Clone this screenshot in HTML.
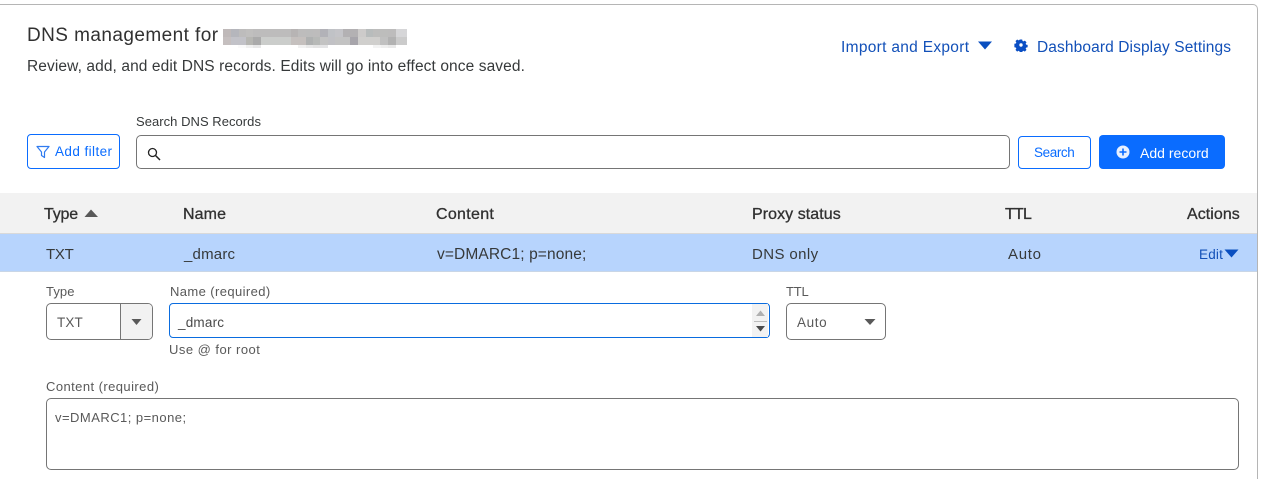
<!DOCTYPE html>
<html lang="en"><head><meta charset="utf-8"><title>DNS management</title>
<style>
html,body{margin:0;padding:0;width:1269px;height:479px;overflow:hidden;background:#fff}
body{font-family:"Liberation Sans",sans-serif;color:#36393a}
#w{position:relative;width:1269px;height:479px;overflow:hidden}
.t{position:absolute;white-space:nowrap;line-height:20px;height:20px}
.b{position:absolute;box-sizing:border-box}
svg{position:absolute;display:block}
.h{font-size:16px;font-weight:400;color:#313131;-webkit-text-stroke:.3px #313131}
.r{font-size:15.5px;color:#36393a}
.l{font-size:13px;color:#595959}
.lnk{color:#0b4fc4;font-size:15.5px}
</style></head><body><div id="w">
<div class="b" style="left:-10px;top:4px;width:1268px;height:470px;border:1px solid #b5b5b5;border-bottom:0;border-radius:5px 5px 0 0"></div>
<div class="b" style="left:1257px;top:470px;width:1px;height:9px;background:#b5b5b5"></div>

<div class="t" style="left:27px;top:26px;font-size:19px;color:#313131;letter-spacing:.43px">DNS management for</div>
<svg style="left:223px;top:29px" width="185" height="20" shape-rendering="crispEdges">
<g>
<rect x="0" y="0" width="184" height="8" fill="#bdbcbc"/><rect x="0" y="8" width="184" height="8" fill="#c3c3c3"/>
<rect x="0" y="0" width="8" height="8" fill="#bfb9b9"/><rect x="8" y="0" width="8" height="8" fill="#b5b6bc"/><rect x="23" y="0" width="7" height="8" fill="#c0bfbe"/><rect x="68" y="0" width="7" height="8" fill="#b7b4b4"/><rect x="83" y="0" width="7" height="8" fill="#bcbcbc"/><rect x="97" y="0" width="8" height="8" fill="#b2b2b8"/><rect x="105" y="0" width="7" height="8" fill="#c0c2c6"/><rect x="112" y="0" width="8" height="8" fill="#c4c4c8"/><rect x="120" y="0" width="15" height="8" fill="#b3b1b3"/><rect x="135" y="0" width="8" height="8" fill="#cdcbca"/><rect x="143" y="0" width="7" height="8" fill="#b8bcbc"/><rect x="150" y="0" width="15" height="8" fill="#bdbdbc"/><rect x="173" y="0" width="11" height="8" fill="#d6d6d8"/>
<rect x="0" y="8" width="8" height="8" fill="#c5bfbf"/><rect x="8" y="8" width="15" height="8" fill="#c2c2c8"/><rect x="23" y="8" width="8" height="8" fill="#b6b6b2"/><rect x="30" y="8" width="8" height="8" fill="#aaaaaa"/><rect x="38" y="8" width="30" height="8" fill="#cbcdcb"/><rect x="68" y="8" width="15" height="8" fill="#c5c0be"/><rect x="83" y="8" width="14" height="8" fill="#afb1b1"/><rect x="90" y="8" width="7" height="8" fill="#b7b9b7"/><rect x="105" y="8" width="7" height="8" fill="#c1c1c5"/><rect x="127" y="8" width="30" height="8" fill="#cfcfcc"/><rect x="127" y="8" width="8" height="8" fill="#a7a5ab"/><rect x="135" y="8" width="22" height="8" fill="#d0cfcd"/><rect x="157" y="8" width="8" height="8" fill="#c0c0c0"/><rect x="165" y="8" width="8" height="8" fill="#b2b2b2"/><rect x="173" y="8" width="11" height="8" fill="#cbcbcb"/>
<rect x="15" y="16" width="8" height="3" fill="#fafafa"/><rect x="23" y="16" width="7" height="3" fill="#f0f0f0"/><rect x="30" y="16" width="8" height="3" fill="#e8e8e8"/><rect x="75" y="16" width="8" height="3" fill="#f1f1f1"/><rect x="83" y="16" width="7" height="3" fill="#e9e9e9"/><rect x="90" y="16" width="7" height="3" fill="#e4e4e4"/><rect x="97" y="16" width="8" height="3" fill="#e4e4e6"/><rect x="150" y="16" width="8" height="3" fill="#f3f3f3"/><rect x="158" y="16" width="7" height="3" fill="#eeeeee"/><rect x="165" y="16" width="8" height="3" fill="#e9e9e9"/>
</g></svg>
<div class="t" style="left:27px;top:57px;font-size:15.5px;color:#36393a;letter-spacing:.1px">Review, add, and edit DNS records. Edits will go into effect once saved.</div>

<div class="t lnk" style="left:841px;top:38px;font-size:15.5px;color:#1250b8;letter-spacing:.3px">Import and Export</div>
<svg style="left:977px;top:41px" width="16" height="10"><path d="M1 0.500H15L8 8.500Z" fill="#0a4fc0"/></svg>
<svg style="left:1014px;top:38px" width="14" height="14" viewBox="0 0 14 14"><path fill="#0b4fc4" fill-rule="evenodd" d="M5.600 0.500h2.800l.4 1.800 1.100.5 1.600-1 2 2-1 1.600.5 1.100 1.800.4v2.800l-1.800.4-.5 1.100 1 1.600-2 2-1.600-1-1.100.5-.4 1.800H5.600l-.4-1.800-1.100-.5-1.600 1-2-2 1-1.600-.5-1.100-1.800-.4V5.600l1.800-.4.5-1.100-1-1.600 2-2 1.600 1 1.100-.5zM7 5a2 2 0 1 0 0 4a2 2 0 0 0 0-4z" transform="translate(1.050 1.050) scale(.85)"/></svg>
<div class="t lnk" style="left:1037px;top:38px;font-size:15.5px;color:#1250b8;letter-spacing:.11px">Dashboard Display Settings</div>

<div class="t l" style="left:136px;top:112px;color:#36393a;font-size:13px;letter-spacing:.04px">Search DNS Records</div>
<div class="b" style="left:27px;top:134px;height:35px;width:93px;border:1px solid #0a6cff;border-radius:4px"></div>
<svg style="left:36px;top:145px" width="14" height="14" viewBox="0 0 14 14"><path d="M1 1.500H13L8.500 7V12.500L5.500 10.500V7Z" fill="none" stroke="#2f7bf0" stroke-width="1.200" stroke-linejoin="round"/></svg>
<div class="t" style="left:55px;top:142px;font-size:13.5px;color:#0a6cff;letter-spacing:.42px">Add filter</div>
<div class="b" style="left:136px;top:135px;width:874px;height:34px;border:1px solid #757575;border-radius:5px"></div>
<svg style="left:147px;top:147px" width="14" height="14" viewBox="0 0 14 14"><circle cx="5.500" cy="5.500" r="4" fill="none" stroke="#222" stroke-width="1.300"/><path d="M8.500 8.500L13 13" stroke="#222" stroke-width="1.500"/></svg>
<div class="b" style="left:1018px;top:136px;width:73px;height:33px;border:1px solid #0a6cff;border-radius:4px"></div>
<div class="t" style="left:1034px;top:143px;font-size:13.5px;color:#0a6cff;letter-spacing:-.4px">Search</div>
<div class="b" style="left:1099px;top:135px;width:126px;height:34px;background:#0a6cff;border-radius:4px"></div>
<svg style="left:1116px;top:145px" width="14" height="14" viewBox="0 0 14 14"><circle cx="7" cy="7" r="6.500" fill="#e8f0ff"/><path d="M7 3.500V10.500M3.500 7H10.500" stroke="#0a6cff" stroke-width="1.600"/></svg>
<div class="t" style="left:1140px;top:143px;font-size:14px;color:#fff;letter-spacing:.02px">Add record</div>

<div class="b" style="left:0;top:193px;width:1257px;height:41px;background:#f2f2f2;border-bottom:1px solid #d9d9d9"></div>
<div class="b" style="left:0;top:234px;width:1257px;height:38px;background:#b7d4fd;border-bottom:1px solid #c9d6e6"></div>
<div class="t h" style="left:44px;top:205px;letter-spacing:-.2px">Type</div>
<svg style="left:84px;top:208px" width="15" height="10"><path d="M0.500 9L7 1.500L14 9Z" fill="#595959"/></svg>
<div class="t h" style="left:183px;top:205px;letter-spacing:.1px">Name</div>
<div class="t h" style="left:436px;top:205px;letter-spacing:.3px">Content</div>
<div class="t h" style="left:752px;top:205px;letter-spacing:.06px">Proxy status</div>
<div class="t h" style="left:1005px;top:205px;letter-spacing:-.8px">TTL</div>
<div class="t h" style="left:1187px;top:205px;letter-spacing:.05px">Actions</div>

<div class="t r" style="left:46px;top:245px;font-size:15px;letter-spacing:-.3px">TXT</div>
<div class="t r" style="left:184px;top:245px;font-size:15px;letter-spacing:.2px">_dmarc</div>
<div class="t r" style="left:437px;top:245px;font-size:15.5px;letter-spacing:.12px">v=DMARC1; p=none;</div>
<div class="t r" style="left:752px;top:245px;font-size:15px;letter-spacing:.4px">DNS only</div>
<div class="t r" style="left:1008px;top:245px;font-size:15px;letter-spacing:.7px">Auto</div>
<div class="t" style="left:1199px;top:245px;font-size:13.5px;color:#1250b8;letter-spacing:.2px">Edit</div>
<svg style="left:1224px;top:249px" width="15" height="10"><path d="M0.500 0.500H14.500L7.500 8.500Z" fill="#0a4fc0"/></svg>

<div class="t l" style="left:46px;top:282px;letter-spacing:.1px">Type</div>
<div class="b" style="left:46px;top:303px;width:107px;height:37px;border:1px solid #757575;border-radius:5px;overflow:hidden"><div class="b" style="left:73px;top:0;width:33px;height:36px;background:#f2f2f2;border-left:1px solid #757575"></div></div>
<svg style="left:131px;top:318px" width="11" height="8"><path d="M0.500 1H10.500L5.500 7Z" fill="#595959"/></svg>
<div class="t" style="left:57px;top:313px;font-size:13.5px;color:#595959;letter-spacing:.1px">TXT</div>

<div class="t l" style="left:170px;top:282px;letter-spacing:.4px">Name (required)</div>
<div class="b" style="left:169px;top:303px;width:601px;height:35px;border:1px solid #0a6cdf;border-radius:4px"></div>
<div class="b" style="left:752px;top:304px;width:16px;height:33px;background:#f2f2f2"></div>
<div class="b" style="left:754px;top:321px;width:13px;height:1px;background:#bbb"></div>
<svg style="left:755px;top:309px" width="11" height="8"><path d="M1 7L5.500 1.500L10 7Z" fill="#b0b0b0"/></svg>
<svg style="left:755px;top:325px" width="11" height="8"><path d="M1 1H10L5.500 6.500Z" fill="#4a4a4a"/></svg>
<div class="t" style="left:178px;top:313px;font-size:13.5px;color:#4a4a4a;letter-spacing:.2px">_dmarc</div>
<div class="t l" style="left:169px;top:340px;letter-spacing:.47px">Use @ for root</div>

<div class="t l" style="left:786px;top:282px;letter-spacing:-.2px">TTL</div>
<div class="b" style="left:786px;top:303px;width:100px;height:37px;border:1px solid #757575;border-radius:5px"></div>
<div class="t" style="left:797px;top:313px;font-size:13.5px;color:#595959;letter-spacing:.6px">Auto</div>
<svg style="left:864px;top:318px" width="12" height="8"><path d="M0.500 1H11.500L6 7Z" fill="#595959"/></svg>

<div class="t l" style="left:46px;top:377px;letter-spacing:.43px">Content (required)</div>
<div class="b" style="left:46px;top:398px;width:1193px;height:72px;border:1px solid #757575;border-radius:5px"></div>
<div class="t" style="left:55px;top:408px;font-size:13px;color:#595959;letter-spacing:.47px">v=DMARC1; p=none;</div>
</div></body></html>
